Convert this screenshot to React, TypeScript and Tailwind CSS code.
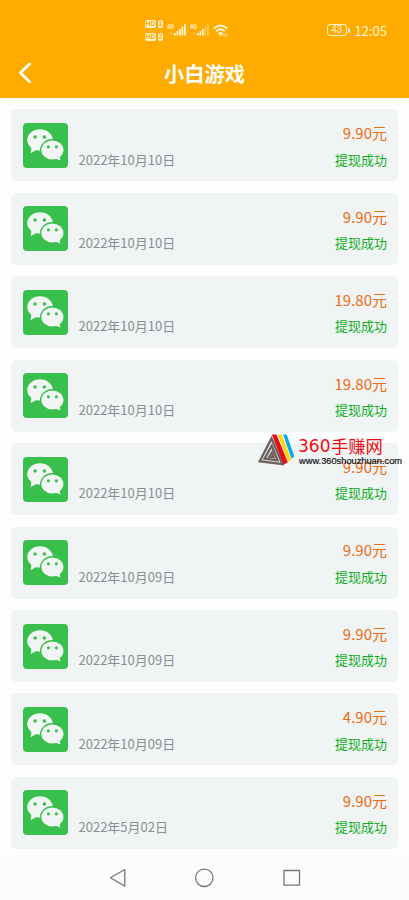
import React from "react";

type Withdrawal = { date: string; amount: string };

const withdrawals: Withdrawal[] = [
  { date: "2022年10月10日", amount: "9.90元" },
  { date: "2022年10月10日", amount: "9.90元" },
  { date: "2022年10月10日", amount: "19.80元" },
  { date: "2022年10月10日", amount: "19.80元" },
  { date: "2022年10月10日", amount: "9.90元" },
  { date: "2022年10月09日", amount: "9.90元" },
  { date: "2022年10月09日", amount: "9.90元" },
  { date: "2022年10月09日", amount: "4.90元" },
  { date: "2022年5月02日", amount: "9.90元" },
];

function WeChatIcon() {
  return (
    <svg viewBox="0 0 45 45" className="h-[45px] w-[45px] shrink-0">
      <rect width="45" height="45" rx="4" fill="#39c04c" />
      <g fill="#f1f5f4">
        <ellipse cx="17" cy="16.9" rx="12.8" ry="10.6" />
        <path d="M8.6 23.5 7.6 30.2l6.2-3.4z" />
      </g>
      <ellipse cx="29.4" cy="27" rx="12.4" ry="10.9" fill="#39c04c" />
      <g fill="#f1f5f4">
        <ellipse cx="29.4" cy="27" rx="11" ry="9.5" />
        <path d="m36.4 32.5 1 5.1-5.4-2.2z" />
      </g>
      <g fill="#39c04c">
        <circle cx="12.1" cy="14" r="1.75" />
        <circle cx="21.4" cy="14" r="1.75" />
        <circle cx="25.4" cy="23.8" r="1.6" />
        <circle cx="33.4" cy="23.8" r="1.6" />
      </g>
    </svg>
  );
}

function SimBadge({ slot }: { slot: string }) {
  return (
    <div className="flex h-2 gap-[2px] text-[7px] leading-[8px] font-bold text-[#ffab00]">
      <span className="w-[11px] rounded-[2px] bg-[#fff3d2] text-center">HD</span>
      <span className="w-[5px] rounded-[2px] bg-[#fff3d2] text-center">{slot}</span>
    </div>
  );
}

function Signal({ label, strong }: { label: string; strong: number }) {
  return (
    <svg viewBox="0 0 20 14" className="h-[14px] w-5" fill="#fff3d2">
      <text x="0" y="5.5" fontSize="7" fontWeight="700" textLength="7" lengthAdjust="spacingAndGlyphs">
        {label}
      </text>
      <path d="M2 9.5v2.5M4.5 9.5v2.5" stroke="#fff3d2" strokeWidth=".8" opacity=".6" />
      {[2.5, 4.5, 6.5, 9, 11.5].map((height, i) => (
        <rect
          key={height}
          x={7 + i * 2.5}
          y={12.5 - height}
          width="1.8"
          height={height}
          opacity={i < strong ? 1 : 0.4}
        />
      ))}
    </svg>
  );
}

function StatusBar() {
  return (
    <div className="flex h-[50px] items-center pt-[10px] font-['Liberation_Sans',sans-serif]">
      <div className="ml-[145px] flex w-[19px] flex-col gap-[5px]">
        <SimBadge slot="1" />
        <SimBadge slot="2" />
      </div>
      <div className="ml-[3px] flex items-center gap-[3px]">
        <Signal label="4G" strong={5} />
        <Signal label="4G" strong={3} />
        <svg viewBox="0 0 15 13" className="h-[13px] w-[15px]" fill="none" stroke="#fff3d2" strokeWidth="1.8">
          <path d="M.8 4.5Q7.5-1.5 14.2 4.5M3 7.3Q7.5 3.3 12 7.3" />
          <path d="M4.7 9.2Q7.5 7 10.3 9.2L7.5 12z" fill="#fff3d2" stroke="none" />
          <path d="M11 9.5v3M13.3 9.5v3" strokeWidth="1" />
        </svg>
      </div>
      <div className="mr-[22px] ml-auto flex items-center text-[#fff3d2]">
        <div className="flex h-3 w-[20px] items-center justify-center rounded-[3px] border border-[#fff3d2] text-[10px] leading-none tracking-tight">
          43
        </div>
        <div className="ml-px h-[5px] w-[2px] rounded-r-sm bg-[#fff3d2]" />
        <span className="mt-[2px] ml-[5px] font-['Noto_Sans_CJK_SC',sans-serif] text-[13px] leading-4">12:05</span>
      </div>
    </div>
  );
}

function WithdrawalCard({ date, amount }: Withdrawal) {
  return (
    <li className="flex h-[72px] shrink-0 items-center rounded-[5px] bg-[#f0f4f5] pr-[11px] pl-3">
      <WeChatIcon />
      <div className="ml-[10.5px] self-end pb-[11.8px] text-[13px] leading-5 text-[#8a8e90]">{date}</div>
      <div className="ml-auto flex flex-col items-end self-end pb-[11.8px] leading-5">
        <span className="mb-[6.4px] text-[15px] text-[#ee6c10]">{amount}</span>
        <span className="text-[13px] text-[#10b01c]">提现成功</span>
      </div>
    </li>
  );
}

function Watermark() {
  return (
    <div className="absolute top-[433px] left-[257px] flex">
      <svg viewBox="0 0 38 34" className="h-[34px] w-[38px]">
        <path d="M14.5 3 .8 29 27 32.5z" fill="#e9e9e8" />
        <g fill="none" stroke="#6c625d" strokeWidth="2.3">
          <path d="M14.5 5.5 2.7 28.2 25.5 31.2z" />
          <path d="M14.8 12.8 7.5 25.7 20.5 27.4z" />
          <path d="M15 19.5 12.3 23.7 16.6 24.2z" />
        </g>
        <path d="M14.8 1.5h4.7l11.3 27.7-4.3 2.5z" fill="#e60c18" />
        <path d="M20.8 1.5h3.9l9.3 25-3 2.3z" fill="#ffd800" />
        <path d="M26 1.5h3.7l7.6 21.8-2.8 2.4z" fill="#11a7e6" />
      </svg>
      <div className="ml-[3px] flex flex-col">
        <div className="mt-[3px] flex h-5 items-center whitespace-nowrap text-[#f00a10]">
          <span className="w-[33px] font-['DejaVu_Sans',sans-serif] text-[17px] leading-5">360</span>
          <span className="mt-[-1px] text-[17.3px] leading-5">手赚网</span>
        </div>
        <svg viewBox="0 0 104 12" className="ml-px h-3 w-[104px]">
          <text
            x="0"
            y="8"
            fontFamily="Liberation Sans, sans-serif"
            fontSize="9"
            fill="#111"
            stroke="#111"
            strokeWidth=".2"
            textLength="103"
            lengthAdjust="spacingAndGlyphs"
          >
            www.360shouzhuan.com
          </text>
        </svg>
      </div>
    </div>
  );
}

function NavigationBar() {
  return (
    <nav className="h-[45px] bg-[#fcfcfc]">
      <svg viewBox="0 0 409 45" className="h-[45px] w-full" fill="none" stroke="#777" strokeWidth="1.3" strokeLinejoin="round">
        <path d="M110.5 22.8 124.8 14.5v16.6z" />
        <circle cx="204.3" cy="22.8" r="8.7" />
        <rect x="284" y="15.5" width="15.5" height="14.7" />
      </svg>
    </nav>
  );
}

export default function App() {
  return (
    <div className="relative flex h-[900px] w-[409px] flex-col overflow-hidden bg-[#fefefe] font-['Noto_Sans_CJK_SC',sans-serif]">
      <header className="h-[98px] bg-[#ffab00] text-white">
        <StatusBar />
        <div className="grid h-[46px] grid-cols-[1fr_auto_1fr] items-center">
          <svg viewBox="0 0 14 22" className="ml-[18px] h-[22px] w-[14px]" fill="none" stroke="white" strokeWidth="2.8" strokeLinecap="round" strokeLinejoin="round">
            <path d="M11.5 2 2.5 10.8 11.5 19.8" />
          </svg>
          <h1 className="text-[20.3px] leading-6 font-bold">小白游戏</h1>
        </div>
      </header>
      <main className="flex-1 px-[11px] pt-[11.4px]">
        <ul className="flex flex-col gap-[11.45px]">
          {withdrawals.map((item, index) => (
            <WithdrawalCard key={index} {...item} />
          ))}
        </ul>
      </main>
      <NavigationBar />
      <Watermark />
    </div>
  );
}
